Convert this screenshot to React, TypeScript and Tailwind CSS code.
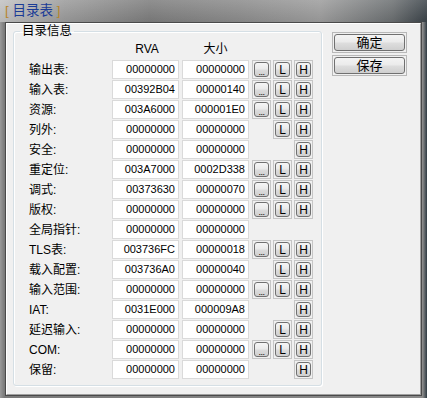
import React from "react";

type Row = { label: string; rva: string; size: string; btns: string };

const rows: Row[] = [
  { label: "输出表:", rva: "00000000", size: "00000000", btns: "DLH" },
  { label: "输入表:", rva: "00392B04", size: "00000140", btns: "DLH" },
  { label: "资源:", rva: "003A6000", size: "000001E0", btns: "DLH" },
  { label: "列外:", rva: "00000000", size: "00000000", btns: "LH" },
  { label: "安全:", rva: "00000000", size: "00000000", btns: "H" },
  { label: "重定位:", rva: "003A7000", size: "0002D338", btns: "DLH" },
  { label: "调式:", rva: "00373630", size: "00000070", btns: "DLH" },
  { label: "版权:", rva: "00000000", size: "00000000", btns: "DLH" },
  { label: "全局指针:", rva: "00000000", size: "00000000", btns: "" },
  { label: "TLS表:", rva: "003736FC", size: "00000018", btns: "DLH" },
  { label: "载入配置:", rva: "003736A0", size: "00000040", btns: "LH" },
  { label: "输入范围:", rva: "00000000", size: "00000000", btns: "DLH" },
  { label: "IAT:", rva: "0031E000", size: "000009A8", btns: "H" },
  { label: "延迟输入:", rva: "00000000", size: "00000000", btns: "LH" },
  { label: "COM:", rva: "00000000", size: "00000000", btns: "DLH" },
  { label: "保留:", rva: "00000000", size: "00000000", btns: "H" },
];

const font = "[font-family:'Liberation_Sans','Noto_Sans_CJK_SC',sans-serif]";

function SmallBtn({ text, show }: { text: string; show: boolean }) {
  if (!show) return <div className="w-[19px] h-[19px]" />;
  return (
    <div className="w-[19px] h-[19px] border border-[#c6c6c6] p-[1px] flex">
      <div className="flex-1 rounded-[3px] border border-[#707070] bg-[linear-gradient(#f6f6f6,#eaeaea_45%,#dcdcdc_55%,#d0d0d0)] flex items-center justify-center text-[12px] leading-none text-black">
        {text === "..." ? (
          <span className="text-[9px] leading-none mt-[6px] tracking-[-0.5px]">...</span>
        ) : (
          <span>{text}</span>
        )}
      </div>
    </div>
  );
}

function Box({ value }: { value: string }) {
  return (
    <div className="w-[67px] h-[19px] bg-white border border-[#dadada] flex items-center justify-end pr-[3px] text-[11px] text-black">
      {value}
    </div>
  );
}

function BigBtn({ text }: { text: string }) {
  return (
    <div className="w-[75px] h-[21px] border border-[#b8b8b8] p-[1px] flex">
      <div className="flex-1 rounded-[3px] border border-[#707070] bg-[linear-gradient(#f4f4f4,#ebebeb_45%,#dddddd_55%,#cfcfcf)] flex items-center justify-center text-[13px] leading-none text-black">
        {text}
      </div>
    </div>
  );
}

export default function App() {
  return (
    <div
      className={`w-[427px] h-[398px] overflow-hidden flex flex-col ${font} bg-[linear-gradient(90deg,#c2c2c2_0%,#9a9a9a_15%,#7c7c7c_35%,#8a8a8a_55%,#9c9c9c_75%,#6a6e70_92%,#3a4248_100%)]`}
    >
      <div className="h-[22px] pl-[5px] pt-[3px] text-[13.5px] leading-[16px] bg-[linear-gradient(180deg,rgba(255,255,255,0.15),rgba(0,0,0,0.05))]">
        <span className="text-[#b8862e]">[ </span>
        <span className="text-[#1b3c96]">目录表</span>
        <span className="text-[#b8862e]"> ]</span>
      </div>
      <div className="flex flex-1 bg-[linear-gradient(90deg,#9a9a9a_0%,#7a7a7a_1%,#8a8a8a_99%,#2e3a42_100%)] pl-[5px] pr-[5px] pb-[2px]">
        <div className="w-[417px] h-[374px] border border-[#4a4a4a] bg-[#f0f0f0]">
          <div className="w-full h-full border border-t-white border-l-white border-r-[#a0a0a0] border-b-[#a0a0a0] flex pl-[6px]">
            <fieldset className="w-[309px] h-[362px] border border-[#d5dfe5] rounded-[3px] pl-[15px] shadow-[inset_1px_1px_0_#ffffff,1px_1px_0_#ffffff]">
              <legend className="ml-[-9px] px-[2px] text-[12.5px] leading-[14px] text-black">
                目录信息
              </legend>
              <div className="h-[22px] flex items-center text-[12px] text-black">
                <div className="w-[83px]" />
                <div className="w-[67px] text-center pl-[3px]">RVA</div>
                <div className="w-[3px]" />
                <div className="w-[67px] text-center">大小</div>
              </div>
              {rows.map((r) => (
                <div key={r.label} className="h-[20px] flex items-start">
                  <div className="w-[83px] h-[19px] flex items-center text-[12px] text-black">
                    {r.label}
                  </div>
                  <Box value={r.rva} />
                  <div className="w-[3px]" />
                  <Box value={r.size} />
                  <div className="w-[3px]" />
                  <div className="flex gap-[2px]">
                    <SmallBtn text="..." show={r.btns.includes("D")} />
                    <SmallBtn text="L" show={r.btns.includes("L")} />
                    <SmallBtn text="H" show={r.btns.includes("H")} />
                  </div>
                </div>
              ))}
            </fieldset>
            <div className="ml-[10px] mt-[8px] flex flex-col gap-[2px]">
              <BigBtn text="确定" />
              <BigBtn text="保存" />
            </div>
          </div>
        </div>
      </div>
    </div>
  );
}
